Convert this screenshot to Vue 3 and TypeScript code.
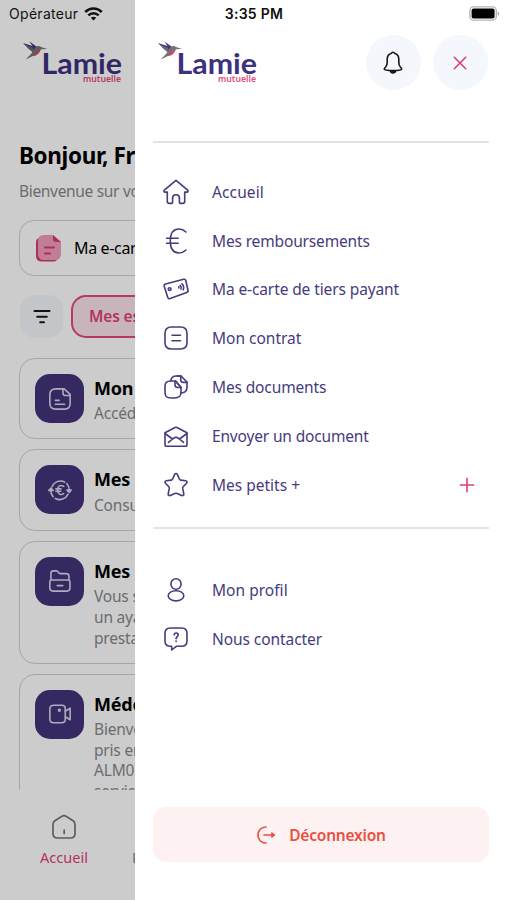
<script setup lang="ts">
import { defineComponent, h } from 'vue'

interface MenuItem {
  label: string
  icon: string
  spacing: number
  expandable?: boolean
}

interface ServiceCard {
  title: string
  lines: string[]
  icon: string
}

const mainMenu: MenuItem[] = [
  { label: 'Accueil', icon: 'home', spacing: 0.12 },
  { label: 'Mes remboursements', icon: 'euro', spacing: -0.15 },
  { label: 'Ma e-carte de tiers payant', icon: 'card', spacing: -0.11 },
  { label: 'Mon contrat', icon: 'contract', spacing: 0 },
  { label: 'Mes documents', icon: 'documents', spacing: -0.13 },
  { label: 'Envoyer un document', icon: 'mail', spacing: -0.16 },
  { label: 'Mes petits +', icon: 'star', spacing: 0, expandable: true },
]

const accountMenu: MenuItem[] = [
  { label: 'Mon profil', icon: 'profile', spacing: 0.03 },
  { label: 'Nous contacter', icon: 'contact', spacing: -0.07 },
]

const cards: ServiceCard[] = [
  { title: 'Mon', lines: ['Accéd'], icon: 'file' },
  { title: 'Mes', lines: ['Consu'], icon: 'refund' },
  { title: 'Mes e', lines: ['Vous s', 'un aya', 'presta'], icon: 'folder' },
  { title: 'Méde', lines: ['Bienve', 'pris en', 'ALM0', 'service'], icon: 'video' },
]

const paths: Record<string, string[]> = {
  home: ['M13 1.3 1.300 11.200c-.7.7-.3 1.900.7 1.900h2.300v9.400c0 1.300.6 1.900 1.900 1.900h2.200c.8 0 1.200-.4 1.200-1.200v-4.400c0-2 1.200-3 3.400-3s3.400 1 3.400 3v4.400c0 .8.4 1.200 1.200 1.200h2.200c1.300 0 1.900-.6 1.900-1.900v-9.400H24c1 0 1.400-1.200.7-1.900Z'],
  euro: ['M23 4C20.800 1.900 18.500 1 16 1 10.300 1 7.300 5.500 7.300 13S10.300 25 16 25c2.500 0 4.800-.9 7-3', 'M3.600 10.200h11.600M3.600 15.200h11.600'],
  card: ['M2.600 8.100 20.600 3.300c1.300-.3 1.900.1 2.200 1.200l2.200 9.700c.3 1.200-.1 1.900-1.300 2.300L7.100 22.600c-1.300.4-2-.1-2.300-1.200L1.200 10.300c-.3-1.200.2-1.900 1.400-2.200Z', 'M5.200 13.100a1.400 1.400 0 1 0 2.800 0 1.400 1.400 0 1 0-2.800 0', 'M17.200 9.300c1 .8 1.300 2.200.8 3.600M19 7.800c1.600 1.500 2 4 1.200 6M15.800 10.900v1'],
  contract: ['M8.500 2h9c4.300 0 6.500 2.200 6.500 6.500v9c0 4.300-2.200 6.500-6.500 6.500h-9C4.200 24 2 21.800 2 17.500v-9C2 4.200 4.200 2 8.500 2Z', 'M9 10.200h8.500M9 15.800h8.500'],
  documents: ['M8 7C2.800 7 2 9 2 13v5c0 4.700 1.500 6 6.300 6h3.200c4.800 0 6.500-1.500 6.500-6v-4.500L12.500 7Z', 'M12 7.200v3.600c0 2 .8 2.700 2.700 2.700H18', 'M7.700 7C8 3.400 9.700 2 13.500 2H18l6 6v5c0 4.200-1.500 6-6 6', 'M17.800 2.200v3.500c0 2 .8 2.700 2.700 2.700H24', 'M14 2h4M12.500 7 18 13.500'],
  mail: ['M2 9.800 12 4.500c.7-.4 1.300-.4 2 0l10 5.300v11.600c0 1.200-.6 1.800-1.800 1.800H3.800C2.600 23.200 2 22.600 2 21.400Z', 'M2 10.500 9.500 16 12 14.500c.7-.4 1.300-.4 2 0l2.500 1.500L24 10.500M9.500 16l-4 3.300M16.500 16l4 3.300'],
  star: ['M11.700 2.400c.6-1.300 2-1.300 2.600 0l2.200 4.700c.3.600.7.9 1.400 1l4.700.6c1.500.2 1.900 1.500.9 2.500l-3.300 3.600c-.5.500-.6 1-.5 1.600l1.100 5.400c.3 1.500-.9 2.300-2.200 1.600l-4.300-1.900c-.8-.3-1.800-.3-2.600 0l-4.300 1.900c-1.300.7-2.500-.1-2.200-1.600l1.100-5.400c.1-.6 0-1.100-.5-1.600l-3.300-3.600c-1-1-.6-2.300.9-2.500l4.700-.6c.7-.1 1.100-.4 1.400-1Z'],
  profile: ['M7.900 7a5.100 5.300 0 1 0 10.200 0 5.100 5.300 0 1 0-10.200 0', 'M5.200 18.800a7.800 5.100 0 1 0 15.600 0 7.800 5.100 0 1 0-15.600 0'],
  contact: ['M7.500 2h11c3.700 0 5.500 1.800 5.500 5.500v7.300c0 3.700-1.800 5.500-5.500 5.500h-5.200L8.700 24v-3.700H7.500C3.800 20.300 2 18.500 2 14.800V7.500C2 3.800 3.800 2 7.500 2Z', 'M11.200 9c.1-2.600 4-2.600 4 0 0 1.600-2.100 1.700-2.100 3.700M13.100 15v.6'],
  file: ['M8.500 2h9l6.500 6v10c0 4.200-1.800 6-6 6H8.500C4.300 24 2 22.200 2 18V8.500C2 4.300 4.300 2 8.500 2Z', 'M16.200 2.300v3.800c0 2.300 1 3.200 3 3.200H24', 'M8 14.500h4M8 18.700h10'],
  refund: ['M4.300 9.500A9.900 9.900 0 0 1 18 4.400M20.300 6a9.900 9.900 0 0 1 2.700 7M21.700 17.500A9.900 9.900 0 0 1 8 22.200M5.500 20.300a9.900 9.900 0 0 1-2.500-7', 'M.8 13.600 3.200 11l2.400 2.600ZM20.400 13l2.600 2.600 2.200-2.600Z', 'M17 9c-3.500-2-6.500-.4-6.500 4s3 6 6.500 4M8.500 11.800h5.500M8.500 14.300h5.500'],
  folder: ['M3.200 11.500V5c0-1.900.8-3 2.700-3h3.300c1.800 0 2.200 3 4 3h6.600c1.900 0 2.900 1.200 2.900 3v3.500', 'M4.300 12h17.200c1.500 0 2.300.8 2.300 2.200v6.500c0 2.200-1.200 3.300-3.300 3.300h-15c-2.200 0-3.500-1.100-3.500-3.300v-6.500c0-1.400.8-2.200 2.300-2.200Z', 'M10 18h6'],
  video: ['M6.300 3.500h8.700c2.500 0 3.700 1.200 3.700 3.700v11.600c0 2.500-1.200 3.700-3.700 3.700H6.300c-2.500 0-4.300-1.200-4.300-3.700V7.200c0-2.500 1.800-3.700 4.300-3.700Z', 'M18.700 10 24 6.800v12.400L18.700 16', 'M11.300 9a1 1 0 1 0 2 0 1 1 0 1 0-2 0'],
}

const Glyph = defineComponent({
  props: { name: { type: String, required: true } },
  setup(props) {
    return () =>
      h(
        'svg',
        {
          viewBox: '0 0 26 26', fill: 'none', stroke: 'currentColor',
          'stroke-linecap': 'round', 'stroke-linejoin': 'round',
        },
        paths[props.name].map((d) => h('path', { d })),
      )
  },
})

const BrandLogo = defineComponent({
  setup() {
    return () =>
      h('svg', { width: 100, height: 46, viewBox: '0 0 100 46' }, [
        h('path', { d: 'M0 4 9.500 7 6.500 2.500 13.500 7.500 14.500 10.500 10 13 6.500 10.500Z', fill: '#3d3a7c' }),
        h('path', { d: 'M1.500 5 10 9l1 3-2 .5-4-3.500Z', fill: '#6a5f85' }),
        h('path', { d: 'M11 10.500c1.500-3 4-4.300 6-3 1.300.5 3 1.600 7.500 2.600l-6.500.2c-1.500 4-4.500 6-8 6.700L2.500 20.500 8 15Z', fill: '#77726f' }),
        h('path', { d: 'M17 10.500c-.5 4.500-3.500 6.500-7.500 6.300 2.800-1 4-4.300 7.500-6.300Z', fill: '#e83e72' }),
        h('text', { x: 18.5, y: 35, textLength: 80.5, lengthAdjust: 'spacingAndGlyphs', 'font-family': 'Lato, sans-serif', 'font-size': 29, 'font-weight': 700, fill: '#3c317f' }, 'Lamie'),
        h('text', { x: 60, y: 43.3, textLength: 38, lengthAdjust: 'spacingAndGlyphs', 'font-family': '"Noto Sans", sans-serif', 'font-size': 8.5, 'font-weight': 600, fill: '#e54c7c' }, 'mutuelle'),
      ])
  },
})
</script>

<template>
  <div class="phone">
    <section class="home">
      <header class="home-brand"><BrandLogo /></header>
      <h1>Bonjour, Fr</h1>
      <p class="welcome">Bienvenue sur vo</p>
      <div class="ecard">
        <svg width="26" height="28" viewBox="0 0 26 28">
          <path d="M4 4C1 5 1 7 1 10v11c0 5 2 6.500 7 6.500h9c3 0 5-.5 6-3Z" fill="#d83a70" />
          <path d="M9 1h9l8 7v11c0 5-2 7-6 7H9c-4 0-6-2-6-7V7c0-4 2-6 6-6Z" fill="#f29dbd" />
          <path d="M18 1l8 7h-5c-2 0-3-1-3-3Z" fill="#d83a70" />
          <path d="M10 13.500h9M10 19.500h5" stroke="#d83a70" stroke-width="2" stroke-linecap="round" />
        </svg>
        <span>Ma e-carte</span>
      </div>
      <div class="filters">
        <div class="filter-button">
          <svg width="18" height="16" viewBox="0 0 18 16" fill="none" stroke="#14181c" stroke-width="2" stroke-linecap="round">
            <path d="M1.500 2h15M4.200 7.700h9.600M7.200 13.300h3.800" />
          </svg>
        </div>
        <div class="chip">Mes espaces</div>
      </div>
      <div class="cards">
        <article v-for="card in cards" :key="card.icon" class="service">
          <div class="tile"><Glyph :name="card.icon" /></div>
          <div class="service-text">
            <h2>{{ card.title }}</h2>
            <p v-for="line in card.lines" :key="line">{{ line }}</p>
          </div>
        </article>
      </div>
      <nav class="tabs">
        <div class="tab active">
          <svg width="26" height="26" viewBox="0 0 26 26" fill="none" stroke="#70777b" stroke-width="1.700" stroke-linejoin="round" stroke-linecap="round">
            <path d="M11 2.200 3.900 6.700C2.500 7.600 2 8.800 2 10.500v9c0 3 1.500 4.500 4.500 4.500h13c3 0 4.500-1.500 4.500-4.500v-9c0-1.700-.5-2.900-1.900-3.800L15 2.200c-1.300-.8-2.700-.8-4 0Z" />
            <path d="M13.200 16v3.500" />
          </svg>
          <span>Accueil</span>
        </div>
        <div class="tab next"><span>R</span></div>
      </nav>
    </section>

    <div class="scrim"></div>

    <aside class="drawer">
      <header class="drawer-head">
        <BrandLogo />
        <div class="actions">
          <button class="round" aria-label="Notifications">
            <svg width="20" height="23" viewBox="0 0 20 23" fill="none" stroke="#15171b" stroke-width="1.600" stroke-linejoin="round">
              <path d="M10 1.300c-1.100 0-1.400.9-2 1.100C5.500 3.300 4.200 5.500 4.200 8v3.500c0 2-.5 3.200-1.600 4.500-.9 1-1.400 1.400-1.400 2.100 0 .9 2.500 1.500 8.800 1.500s8.800-.6 8.800-1.500c0-.7-.5-1.100-1.400-2.100-1.100-1.300-1.600-2.500-1.600-4.500V8c0-2.500-1.300-4.700-3.800-5.600-.6-.2-.9-1.100-2-1.100Z" />
              <path d="M7.500 19.800c.4 2.700 4.600 2.700 5 0Z" fill="#15171b" />
            </svg>
          </button>
          <button class="round" aria-label="Fermer">
            <svg width="14" height="14" viewBox="0 0 14 14" stroke="#df3e73" stroke-width="1.600" stroke-linecap="round">
              <path d="M1.300 1.300l11.400 11.400M12.700 1.300 1.300 12.700" />
            </svg>
          </button>
        </div>
      </header>
      <nav class="menu main">
        <div v-for="item in mainMenu" :key="item.label" class="row">
          <Glyph :name="item.icon" />
          <span :style="{ letterSpacing: item.spacing + 'px' }">{{ item.label }}</span>
          <svg v-if="item.expandable" class="plus" width="16" height="16" viewBox="0 0 16 16">
            <path d="M8 .8v14.400M.8 8h14.400" />
          </svg>
        </div>
      </nav>
      <nav class="menu account">
        <div v-for="item in accountMenu" :key="item.label" class="row">
          <Glyph :name="item.icon" />
          <span :style="{ letterSpacing: item.spacing + 'px' }">{{ item.label }}</span>
        </div>
      </nav>
      <button class="logout">
        <svg width="19" height="18" viewBox="0 0 19 18" fill="none" stroke="#e8503f" stroke-width="1.700" stroke-linecap="round" stroke-linejoin="round">
          <path d="M9 1C4.300.8 1 4.500 1 9s3.300 8.200 8 8M7 9h10" />
          <path d="M15 6.800 17.900 9 15 11.200Z" fill="#e8503f" stroke-width="1" />
        </svg>
        <span>Déconnexion</span>
      </button>
    </aside>

    <div class="status">
      <div class="carrier">
        <span>Opérateur</span>
        <svg width="19" height="14" viewBox="0 0 19 14" fill="none" stroke="#111" stroke-width="2.500">
          <path d="M1.200 5C6 .3 13 .3 17.800 5M4.300 8.300c3-2.900 7.400-2.900 10.400 0" />
          <path d="M9.500 13.500 6.800 10.800c1.600-1.400 3.800-1.400 5.400 0Z" fill="#111" stroke="none" />
        </svg>
      </div>
      <span class="time">3:35 PM</span>
      <svg class="battery" width="31" height="15" viewBox="0 0 31 15">
        <rect x=".9" y=".9" width="26.400" height="13.200" rx="3.700" fill="#fff" stroke="#b5b5b5" stroke-width="1.400" />
        <rect x="2.600" y="2.600" width="23" height="9.800" rx="2" fill="#000" />
        <path d="M28.700 5.200c2 .8 2 3.800 0 4.600Z" fill="#aaa" />
      </svg>
    </div>
  </div>
</template>

<style>
body {
  margin: 0;
  background: #fff;
}
</style>

<style scoped>
* {
  box-sizing: border-box;
}
.phone {
  position: relative;
  width: 507px;
  height: 900px;
  overflow: hidden;
  font-family: "Noto Sans", "Open Sans", sans-serif;
  white-space: nowrap;
}
h1, h2, p {
  margin: 0;
}
button {
  border: 0;
  padding: 0;
  font: inherit;
}
.home {
  display: flex;
  flex-direction: column;
  height: 900px;
  padding: 39px 0 0 19px;
}
.home-brand {
  height: 101px;
  padding-left: 4px;
}
h1 {
  height: 32px;
  font-size: 22.5px;
  line-height: 32px;
  font-weight: 700;
  letter-spacing: -0.35px;
}
.welcome {
  height: 48px;
  padding-top: 8px;
  font-size: 15.5px;
  line-height: 22px;
  letter-spacing: -0.32px;
  color: #85898d;
}
.ecard {
  display: flex;
  align-items: center;
  gap: 13px;
  height: 56px;
  padding-left: 15px;
  border: 1.5px solid #cdd1d4;
  border-radius: 15px;
  font-size: 16px;
  letter-spacing: -0.35px;
  flex: none;
}
.filters {
  display: flex;
  gap: 8px;
  padding: 19px 0 20px 1px;
}
.filter-button {
  display: flex;
  align-items: center;
  justify-content: center;
  width: 43px;
  height: 43px;
  border-radius: 15px;
  background: #f4f8fb;
}
.chip {
  width: 200px;
  height: 43px;
  padding-left: 16px;
  border: 2px solid #e84580;
  border-radius: 15px;
  background: #fbe3ec;
  color: #e23f76;
  font-size: 15.5px;
  font-weight: 600;
  letter-spacing: -0.15px;
  line-height: 39px;
}
.cards {
  display: flex;
  flex-direction: column;
  gap: 10.2px;
  height: 432px;
  overflow: hidden;
}
.service {
  display: flex;
  flex: none;
  gap: 10px;
  padding: 15px 0 14.3px 15px;
  border: 1.5px solid #cdd1d4;
  border-radius: 16px;
}
.tile {
  display: flex;
  flex: none;
  align-items: center;
  justify-content: center;
  width: 49px;
  height: 49px;
  border-radius: 15px;
  background: #44337a;
  color: #ded6ee;
}
.tile svg {
  width: 24px;
  height: 24px;
  stroke-width: 1.7;
}
h2 {
  height: 29.3px;
  font-size: 18px;
  line-height: 28px;
  font-weight: 700;
  letter-spacing: -0.2px;
}
.service-text p {
  height: 20.7px;
  font-size: 15.5px;
  line-height: 20.7px;
  letter-spacing: -0.2px;
  color: #85898d;
}
.tabs {
  display: flex;
  padding-top: 24px;
}
.tab {
  display: flex;
  flex-direction: column;
  align-items: center;
  width: 90px;
  gap: 7.4px;
  font-size: 14.5px;
  line-height: 20px;
}
.active {
  color: #e23f76;
}
.next {
  align-items: flex-start;
  padding: 33.4px 0 0 23px;
  color: #85898d;
}
.scrim {
  position: absolute;
  inset: 0;
  background: rgba(0, 0, 0, 0.2);
}
.drawer {
  position: absolute;
  top: 0;
  left: 135px;
  width: 372px;
  height: 900px;
  padding: 0 18px;
  background: #fff;
}
.drawer-head {
  display: flex;
  justify-content: space-between;
  height: 143px;
  padding: 39px 1.5px 0 5px;
  border-bottom: 2px solid #e3e4e6;
}
.actions {
  display: flex;
  gap: 12px;
  margin-top: -4px;
}
.round {
  display: flex;
  align-items: center;
  justify-content: center;
  width: 55px;
  height: 55px;
  border-radius: 50%;
  background: #f4f7fb;
}
.menu {
  color: #463b7e;
}
.main {
  height: 386px;
  padding-top: 24.2px;
  border-bottom: 2px solid #e3e4e6;
}
.account {
  height: 278px;
  padding-top: 37px;
}
.row {
  display: flex;
  align-items: center;
  height: 48.9px;
  padding-left: 9.7px;
  font-size: 15.5px;
}
.row > svg:first-child {
  width: 26px;
  height: 26px;
  margin-right: 23.3px;
  stroke-width: 1.6;
}
.plus {
  margin-left: auto;
  margin-right: 14px;
  stroke: #df3e73;
  stroke-width: 1.6;
}
.logout {
  display: flex;
  align-items: center;
  justify-content: center;
  gap: 13px;
  width: 336px;
  height: 55px;
  padding-left: 1px;
  border-radius: 13px;
  background: #fef1f1;
  color: #e8503f;
  font-size: 15.5px;
  font-weight: 600;
  letter-spacing: -0.2px;
}
.status {
  position: absolute;
  top: 0;
  left: 0;
  display: grid;
  grid-template-columns: 1fr auto 1fr;
  align-items: center;
  width: 507px;
  height: 27px;
  padding: 0 7px 0 9px;
  font-family: Inter, sans-serif;
  font-size: 14px;
  color: #111;
}
.carrier {
  display: flex;
  align-items: center;
  gap: 5.5px;
  letter-spacing: 0.3px;
}
.time {
  margin-right: 1px;
  font-weight: 600;
  letter-spacing: 0.3px;
}
.battery {
  justify-self: end;
}
</style>
